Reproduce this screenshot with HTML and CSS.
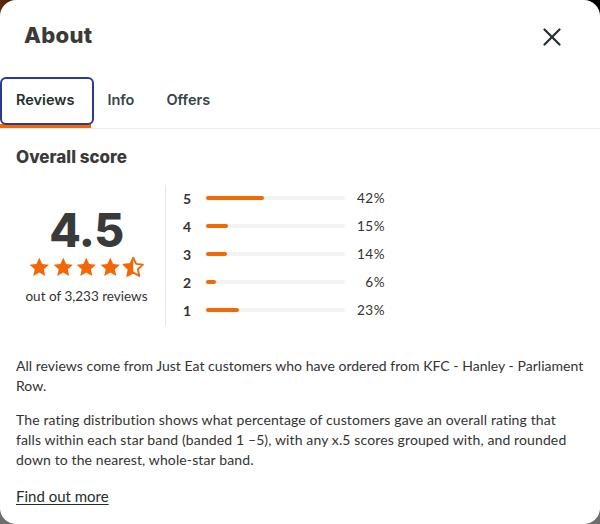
FILE: index.html
```html
<!DOCTYPE html>
<html lang="en">
<head>
<meta charset="utf-8">
<title>About</title>
<link rel="stylesheet" href="styles.css">
</head>
<body>
<div class="modal">
  <header class="header">
    <h1 class="title">About</h1>
    <button class="close" aria-label="Close">
      <svg width="18" height="18" viewBox="0 0 18 18"><path d="M1.5 1.5 L16.5 16.5 M16.5 1.5 L1.5 16.5" stroke="#242e30" stroke-width="2.2" stroke-linecap="round" fill="none"/></svg>
    </button>
  </header>
  <nav class="tabs">
    <div class="tab active">Reviews</div>
    <div class="tab">Info</div>
    <div class="tab">Offers</div>
  </nav>
  <main class="content">
    <h2 class="section-title">Overall score</h2>
    <div class="score">
      <div class="score-left">
        <div class="big">4.5</div>
        <div class="stars">
          <svg viewBox="0 0 24 24" class="star"><path d="M12 1.8l3.1 6.6 7.2.8-5.4 4.9 1.5 7.1L12 17.6l-6.4 3.6 1.5-7.1L1.7 9.2l7.2-.8z" fill="#f36805"/></svg>
          <svg viewBox="0 0 24 24" class="star"><path d="M12 1.8l3.1 6.6 7.2.8-5.4 4.9 1.5 7.1L12 17.6l-6.4 3.6 1.5-7.1L1.7 9.2l7.2-.8z" fill="#f36805"/></svg>
          <svg viewBox="0 0 24 24" class="star"><path d="M12 1.8l3.1 6.6 7.2.8-5.4 4.9 1.5 7.1L12 17.6l-6.4 3.6 1.5-7.1L1.7 9.2l7.2-.8z" fill="#f36805"/></svg>
          <svg viewBox="0 0 24 24" class="star"><path d="M12 1.8l3.1 6.6 7.2.8-5.4 4.9 1.5 7.1L12 17.6l-6.4 3.6 1.5-7.1L1.7 9.2l7.2-.8z" fill="#f36805"/></svg>
          <svg viewBox="0 0 24 24" class="star"><path d="M12 1.8l3.1 6.6 7.2.8-5.4 4.9 1.5 7.1L12 17.6l-6.4 3.6 1.5-7.1L1.7 9.2l7.2-.8z" fill="none" stroke="#f36805" stroke-width="2" stroke-linejoin="round"/><path d="M12 1.8 L12 17.6 L5.6 21.2 L7.1 14.1 L1.7 9.2 L8.9 8.4 Z" fill="#f36805"/></svg>
        </div>
        <div class="count">out of 3,233 reviews</div>
      </div>
      <div class="bars">
        <div class="row"><span class="num">5</span><span class="track"><span class="fill" style="width:42%"></span></span><span class="pct">42%</span></div>
        <div class="row"><span class="num">4</span><span class="track"><span class="fill" style="width:16%"></span></span><span class="pct">15%</span></div>
        <div class="row"><span class="num">3</span><span class="track"><span class="fill" style="width:15%"></span></span><span class="pct">14%</span></div>
        <div class="row"><span class="num">2</span><span class="track"><span class="fill" style="width:7%"></span></span><span class="pct">6%</span></div>
        <div class="row"><span class="num">1</span><span class="track"><span class="fill" style="width:24%"></span></span><span class="pct">23%</span></div>
      </div>
    </div>
    <p class="text">All reviews come from Just Eat customers who have ordered from KFC - Hanley - Parliament Row.</p>
    <p class="text note">The rating distribution shows what percentage of customers gave an overall rating that falls within each star band (banded 1 –5), with any x.5 scores grouped with, and rounded down to the nearest, whole-star band.</p>
    <a class="more" href="#">Find out more</a>
  </main>
</div>
</body>
</html>
```
FILE: styles.css
```css
* { box-sizing: border-box; }
html, body { margin: 0; padding: 0; }
body {
  width: 600px;
  height: 524px;
  overflow: hidden;
  background:
    linear-gradient(to right, #5a2a0c 0, #3a1a08 20px, #000 580px) top / 100% 50% no-repeat,
    #6e6e6e;
  font-family: Lato, "Noto Sans", sans-serif;
  color: #242e30;
}
.modal {
  width: 600px;
  height: 524px;
  background: #fff;
  border-radius: 16px;
  overflow: hidden;
  display: flex;
  flex-direction: column;
}
.header {
  height: 77px;
  display: flex;
  align-items: center;
  justify-content: space-between;
  padding: 0 39px 4px 24px;
}
.title {
  margin: 0;
  font-family: Inter, sans-serif;
  font-weight: 800;
  font-size: 22px;
  letter-spacing: 0.3px;
  color: #3a3a3a;
  position: relative;
  top: -2px;
}
.close {
  border: 0;
  background: none;
  padding: 0;
  width: 18px;
  height: 18px;
  display: flex;
}
.tabs {
  display: flex;
  border-bottom: 1px solid #ececec;
  height: 52px;
}
.tab {
  position: relative;
  padding: 0 16px;
  height: 51px;
  display: flex;
  align-items: center;
  padding-bottom: 6px;
  font-family: Inter, sans-serif;
  font-size: 14.5px;
  font-weight: 600;
  color: #364548;
}
.tab.active {
  color: #242e30;
  border-bottom: 4px solid #f36805;
  padding: 0 17px 2px 16px;
}
.tab.active::after {
  content: "";
  position: absolute;
  left: 0;
  top: 0;
  right: -3px;
  bottom: -1px;
  border: 2px solid #2b3a92;
  border-radius: 6px;
}
.content {
  padding: 0 16px;
}
.section-title {
  margin: 17px 0 0;
  font-family: Inter, sans-serif;
  font-weight: 800;
  font-size: 17px;
  color: #3a3a3a;
  line-height: 22px;
}
.score {
  display: flex;
  margin-top: 17px;
}
.score-left {
  width: 150px;
  height: 141px;
  border-right: 1px solid #e6e6e6;
  display: flex;
  flex-direction: column;
  align-items: center;
  padding: 22px 8px 0 0;
}
.big {
  font-family: Inter, sans-serif;
  font-weight: 800;
  font-size: 46px;
  line-height: 46px;
  color: #3a3a3a;
  letter-spacing: -0.5px;
}
.stars {
  display: flex;
  gap: 1px;
  margin-top: 3px;
}
.star {
  width: 22.5px;
  height: 22.5px;
}
.count {
  margin-top: 9px;
  font-size: 13.5px;
  color: #333;
}
.bars {
  padding-left: 17px;
  margin-top: -1px;
  display: flex;
  flex-direction: column;
}
.row {
  display: flex;
  align-items: center;
  height: 28px;
}
.num {
  width: 23px;
  font-weight: 700;
  font-size: 14px;
  color: #333;
}
.track {
  width: 139px;
  height: 4px;
  border-radius: 2px;
  background: #f5f3f1;
  display: flex;
}
.fill {
  height: 4px;
  border-radius: 2px;
  background: #f36805;
}
.pct {
  width: 40px;
  text-align: right;
  font-size: 13.5px;
  color: #333;
  letter-spacing: 0.5px;
}
.text {
  margin: 30px 0 0;
  font-size: 14px;
  line-height: 20px;
  letter-spacing: 0.03px;
  color: #333;
}
.text.note {
  margin-top: 14px;
  letter-spacing: 0.12px;
}
.more {
  display: inline-block;
  margin-top: 17px;
  font-size: 15px;
  color: #242e30;
  text-decoration: underline;
  text-underline-offset: 2px;
}
```
